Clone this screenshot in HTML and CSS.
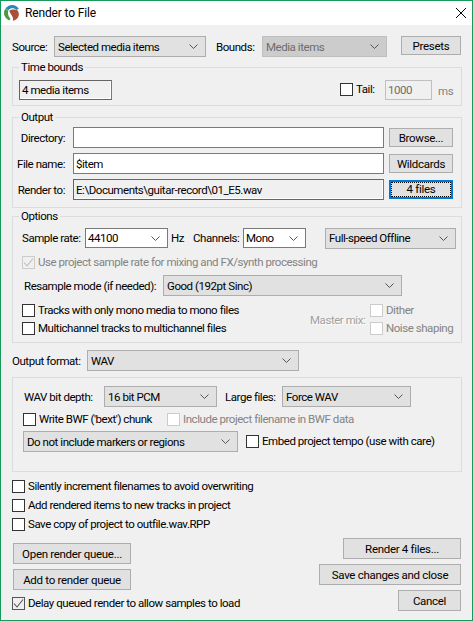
FILE: index.html
```html
<!DOCTYPE html>
<html lang="en">
  <head>
    <meta charset="UTF-8" />
    <title>Render to File</title>
    <link rel="stylesheet" href="styles.css">
  </head>
  <body>
    <svg class="defs" width="0" height="0">
      <symbol id="chev" viewBox="0 0 9 5"><path d="M0.5 0.5 L4.5 4.5 L8.5 0.5" fill="none" stroke="currentColor" /></symbol>
      <symbol id="tick" viewBox="0 0 11 11"><path d="M1 5.5 L4 9 L10 1.5" fill="none" stroke="currentColor" stroke-width="1.1" /></symbol>
    </svg>
    <div id="window">
      <div class="titlebar">
        <svg class="logo" viewBox="0 0 16 16">
          <circle cx="8" cy="8" r="8" fill="#fff" />
          <path d="M5 15.4 A8 8 0 0 1 1.2 3.8 L4.4 5.6 C3.4 8.4 4.2 11.6 6.6 14 Z" fill="#4d9a46" />
          <path d="M1.4 3.6 A8 8 0 0 1 14.8 3.8 L12.6 5 C10 2.8 6.6 2.8 4.4 5.2 Z" fill="#2a86b4" />
          <path d="M5.4 5.6 C8 3.8 11.6 4.4 13.6 5.4 C16.6 9.6 14 14.6 8.8 15.8 C9.6 13.4 8.6 11.6 7.4 10 C6.4 8.6 5.6 7.2 5.4 5.6 Z" fill="#a8503c" />
        </svg>
        <span class="title">Render to File</span>
        <svg class="close" viewBox="0 0 10 10"><path d="M0 0 L10 10 M10 0 L0 10" stroke="#000" fill="none" /></svg>
      </div>

      <div class="dialog">
        <div class="row source-row">
          <label class="lbl w-source">Source:</label>
          <div class="select w-152"><span>Selected media items</span><svg class="chev"><use href="#chev" /></svg></div>
          <label class="lbl w-bounds">Bounds:</label>
          <div class="select disabled w-125"><span>Media items</span><svg class="chev"><use href="#chev" /></svg></div>
          <button class="btn presets">Presets</button>
        </div>

        <div class="group time-group">
          <div class="group-title">Time bounds</div>
          <div class="row time-row">
            <div class="readonly">4 media items</div>
            <div class="check tail"><span class="box"></span><span>Tail:</span></div>
            <input class="field tail-input" value="1000" disabled />
            <span class="ms">ms</span>
          </div>
        </div>

        <div class="group output-group">
          <div class="group-title">Output</div>
          <div class="row path-row">
            <label class="lbl path-lbl">Directory:</label>
            <input class="field path" value="" />
            <button class="btn side">Browse...</button>
          </div>
          <div class="row path-row">
            <label class="lbl path-lbl">File name:</label>
            <input class="field path" value="$item" />
            <button class="btn side">Wildcards</button>
          </div>
          <div class="row path-row">
            <label class="lbl path-lbl">Render to:</label>
            <div class="readonly path">E:\Documents\guitar-record\01_E5.wav</div>
            <button class="btn side focused"><span>4 files</span></button>
          </div>
        </div>

        <div class="group options-group">
          <div class="group-title">Options</div>
          <div class="row rate-row">
            <label class="lbl w-rate">Sample rate:</label>
            <div class="select white w-83"><span>44100</span><svg class="chev"><use href="#chev" /></svg></div>
            <label class="lbl w-hz">Hz</label>
            <label class="lbl w-channels">Channels:</label>
            <div class="select white w-63"><span>Mono</span><svg class="chev"><use href="#chev" /></svg></div>
            <div class="select w-131 speed"><span>Full-speed Offline</span><svg class="chev"><use href="#chev" /></svg></div>
          </div>
          <div class="check use-project off">
            <span class="box checked"><svg><use href="#tick" /></svg></span>
            <span>Use project sample rate for mixing and FX/synth processing</span>
          </div>
          <div class="row resample-row">
            <label class="lbl w-resample">Resample mode (if needed):</label>
            <div class="select w-239"><span>Good (192pt Sinc)</span><svg class="chev"><use href="#chev" /></svg></div>
          </div>
          <div class="mix-row">
            <div class="mix-left">
              <div class="check"><span class="box"></span><span>Tracks with only mono media to mono files</span></div>
              <div class="check"><span class="box"></span><span>Multichannel tracks to multichannel files</span></div>
            </div>
            <label class="lbl master">Master mix:</label>
            <div class="mix-right">
              <div class="check off"><span class="box"></span><span>Dither</span></div>
              <div class="check off"><span class="box"></span><span>Noise shaping</span></div>
            </div>
          </div>
        </div>

        <div class="row format-row">
          <label class="lbl w-format">Output format:</label>
          <div class="select w-212"><span>WAV</span><svg class="chev"><use href="#chev" /></svg></div>
        </div>

        <div class="group wav-group">
          <div class="row depth-row">
            <label class="lbl w-depth">WAV bit depth:</label>
            <div class="select w-113"><span>16 bit PCM</span><svg class="chev"><use href="#chev" /></svg></div>
            <label class="lbl w-large">Large files:</label>
            <div class="select w-129"><span>Force WAV</span><svg class="chev"><use href="#chev" /></svg></div>
          </div>
          <div class="row bwf-row">
            <div class="check w-bwf"><span class="box"></span><span>Write BWF ('bext') chunk</span></div>
            <div class="check off"><span class="box"></span><span>Include project filename in BWF data</span></div>
          </div>
          <div class="row markers-row">
            <div class="select w-215"><span>Do not include markers or regions</span><svg class="chev"><use href="#chev" /></svg></div>
            <div class="check embed"><span class="box"></span><span>Embed project tempo (use with care)</span></div>
          </div>
        </div>

        <div class="checks">
          <div class="check"><span class="box"></span><span>Silently increment filenames to avoid overwriting</span></div>
          <div class="check"><span class="box"></span><span>Add rendered items to new tracks in project</span></div>
          <div class="check"><span class="box"></span><span>Save copy of project to outfile.wav.RPP</span></div>
        </div>

        <div class="footer">
          <div class="footer-left">
            <button class="btn queue">Open render queue...</button>
            <button class="btn queue">Add to render queue</button>
            <div class="check delay"><span class="box checked"><svg><use href="#tick" /></svg></span><span>Delay queued render to allow samples to load</span></div>
          </div>
          <div class="footer-right">
            <button class="btn render">Render 4 files...</button>
            <button class="btn save">Save changes and close</button>
            <button class="btn cancel">Cancel</button>
          </div>
        </div>
      </div>
    </div>
  </body>
</html>
```

FILE: styles.css
```css
* {
  box-sizing: border-box;
}

body {
  margin: 0;
  font-family: "Roboto", "Liberation Sans", sans-serif;
  font-size: 11.5px;
  letter-spacing: -0.45px;
  color: #000;
}

.defs {
  display: block;
  height: 0;
}

#window {
  width: 473px;
  height: 621px;
  border: 1px solid #16995a;
  background-color: #f0f0f0;
  overflow: hidden;
}

.titlebar {
  display: flex;
  align-items: center;
  height: 24px;
  background-color: #fff;
  padding-left: 3px;
}

.logo {
  width: 16px;
  height: 16px;
}

.title {
  margin-left: 5px;
  font-size: 12px;
  letter-spacing: -0.15px;
}

.close {
  width: 10px;
  height: 10px;
  margin-left: auto;
  margin-right: 6px;
}

.dialog {
  padding: 11px 0 0 11px;
}

.row {
  display: flex;
  align-items: center;
}

.lbl {
  display: block;
  white-space: nowrap;
}

/* controls */
.select {
  display: flex;
  align-items: center;
  justify-content: space-between;
  height: 21px;
  padding: 0 5px 0 3px;
  background-color: #e1e1e1;
  border: 1px solid #adadad;
  white-space: nowrap;
}

.select.white {
  background-color: #fff;
  border-color: #7a7a7a;
  padding-left: 2px;
  height: 20px;
}

.select.disabled {
  background-color: #ccc;
  border-color: #bfbfbf;
  color: #6d6d6d;
}

.chev {
  width: 9px;
  height: 5px;
  color: #555;
  flex: none;
  margin-right: 2px;
}

.btn {
  display: block;
  padding: 0;
  font: inherit;
  letter-spacing: -0.3px;
  color: #000;
  background-color: #e1e1e1;
  border: 1px solid #adadad;
}

.field {
  height: 21px;
  padding: 0 2px;
  font: inherit;
  letter-spacing: inherit;
  color: #000;
  background-color: #fff;
  border: 1px solid #7a7a7a;
  border-radius: 0;
}

.readonly {
  display: flex;
  align-items: center;
  height: 21px;
  padding: 0 2px;
  background-color: #f0f0f0;
  border: 1px solid #646464;
  border-right-color: #7a7a7a;
  box-shadow: inset -1px -1px 0 #fff;
  white-space: nowrap;
}

.check {
  display: flex;
  align-items: center;
  height: 13px;
  white-space: nowrap;
}

.check > span:last-child {
  margin-bottom: 2px;
}

.box {
  flex: none;
  display: block;
  width: 13px;
  height: 13px;
  margin-right: 3px;
  background-color: #fff;
  border: 1px solid #333;
}

.box svg {
  display: block;
  width: 11px;
  height: 11px;
  color: #555;
}

.box.checked {
  background-color: #f0f0f0;
  border-color: #555;
}

.check.off {
  color: #838383;
}

.check.off .box {
  border-color: #ccc;
}

.check.off .box svg {
  color: #bbb;
}

/* groups */
.group {
  width: 450px;
  border: 1px solid #dcdcdc;
}

.group-title {
  width: fit-content;
  height: 15px;
  line-height: 15px;
  margin: -8px 0 0 6px;
  padding: 0 2px;
  background-color: #f0f0f0;
}

/* source row */
.source-row {
  height: 21px;
}

.w-source {
  width: 42px;
}

.w-152 {
  width: 152px;
}

.w-bounds {
  width: 46px;
  margin-left: 10px;
}

.w-125 {
  width: 125px;
}

.presets {
  width: 60px;
  height: 19px;
  margin-left: 14px;
  margin-bottom: 2px;
}

/* time bounds */
.time-group {
  height: 39px;
  margin-top: 10px;
}

.time-row {
  margin-top: 4px;
  padding-left: 6px;
}

.time-row .readonly {
  width: 93px;
  height: 20px;
}

.tail {
  width: 45px;
  margin-left: 228px;
}

.tail-input {
  width: 47px;
  height: 20px;
  color: #6d6d6d;
  background-color: #f0f0f0;
  border-color: #bfbfbf;
  margin-top: 1px;
}

.ms {
  margin-left: 6px;
  margin-top: 2px;
  color: #838383;
}

/* output */
.output-group {
  height: 91px;
  margin-top: 11px;
}

.path-row {
  margin-top: 5px;
}

.output-group .group-title + .path-row {
  margin-top: 2px;
}

.path-lbl {
  width: 52px;
  text-align: right;
  margin-right: 8px;
}

.path {
  width: 311px;
}

.side {
  width: 64px;
  height: 19px;
  margin-left: 5px;
}

.focused {
  border: 2px solid #0078d7;
}

.focused span {
  display: block;
  height: 100%;
  line-height: 13px;
  border: 1px dotted #000;
}

/* options */
.options-group {
  height: 127px;
  margin-top: 8px;
}

.rate-row {
  height: 20px;
  margin-top: 4px;
  padding-left: 9px;
}

.w-rate {
  width: 63px;
}

.w-83 {
  width: 83px;
}

.w-hz {
  width: 22px;
  margin-left: 3px;
}

.w-channels {
  width: 50px;
}

.w-63 {
  width: 63px;
}

.speed {
  margin-left: 19px;
}

.w-131 {
  width: 131px;
}

.use-project {
  margin: 8px 0 0 9px;
}

.resample-row {
  margin-top: 6px;
  padding-left: 11px;
}

.w-resample {
  width: 139px;
}

.w-239 {
  width: 239px;
}

.mix-row {
  display: flex;
  align-items: center;
  margin-top: 8px;
}

.mix-left {
  width: 297px;
  padding-left: 9px;
}

.mix-left .check + .check,
.mix-right .check + .check {
  margin-top: 5px;
}

.master {
  width: 60px;
  color: #a0a0a0;
  text-shadow: 1px 1px 0 #fff;
}

/* format */
.format-row {
  margin-top: 7px;
}

.w-format {
  width: 75px;
}

.w-212 {
  width: 212px;
}

.wav-group {
  height: 95px;
  margin-top: 6px;
  padding-left: 10px;
}

.depth-row {
  margin-top: 8px;
  padding-left: 1px;
}

.w-depth {
  width: 80px;
}

.w-113 {
  width: 113px;
}

.w-large {
  width: 57px;
  margin-left: 8px;
}

.w-129 {
  width: 129px;
}

.bwf-row {
  margin-top: 6px;
}

.w-bwf {
  width: 144px;
}

.markers-row {
  margin-top: 5px;
}

.w-215 {
  width: 215px;
}

.embed {
  margin-left: 8px;
}

/* bottom */
.checks {
  margin-top: 8px;
}

.checks .check + .check {
  margin-top: 6px;
}

.footer {
  display: flex;
  justify-content: space-between;
  width: 449px;
  margin-top: 7px;
}

.footer-left {
  padding-top: 5px;
}

.queue {
  width: 118px;
  height: 21px;
  margin: 0 0 5px 1px;
}

.delay {
  margin-top: 7px;
}

.footer-right {
  display: flex;
  flex-direction: column;
  align-items: flex-end;
  gap: 5px;
}

.render,
.save,
.cancel {
  height: 21px;
}

.render {
  width: 118px;
}

.save {
  width: 142px;
}

.cancel {
  width: 63px;
}
```
